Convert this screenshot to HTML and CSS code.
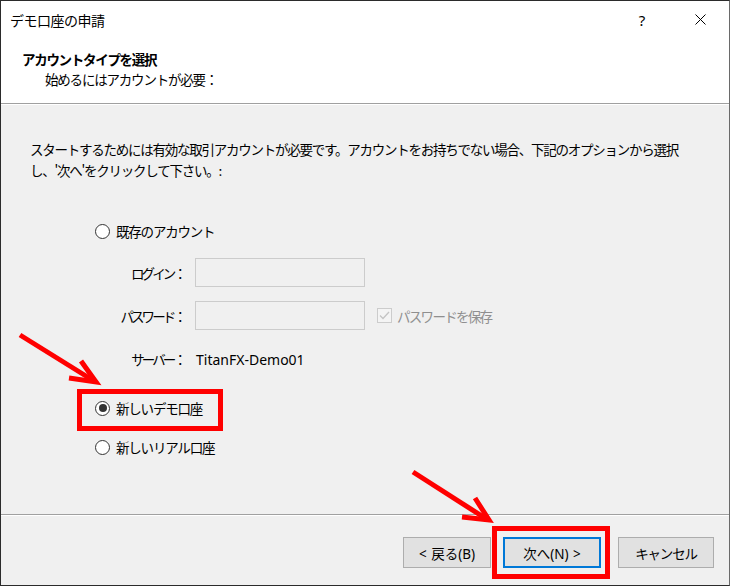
FILE: index.html
```html
<!DOCTYPE html>
<html lang="ja">
<head>
<meta charset="utf-8">
<title>デモ口座の申請</title>
<link rel="stylesheet" href="styles.css">
</head>
<body>
<div class="window">
  <div class="titlebar">
    <div class="title">デモ口座の申請</div>
    <div class="controls">
      <div class="ctl help">?</div>
      <div class="ctl close">
        <svg width="11" height="11" viewBox="0 0 11 11"><path d="M0.5 0.5 L10.5 10.5 M10.5 0.5 L0.5 10.5" stroke="#000" stroke-width="1" fill="none"/></svg>
      </div>
    </div>
  </div>
  <div class="header">
    <div class="h-title">アカウントタイプを選択</div>
    <div class="h-sub">始めるにはアカウントが必要：</div>
  </div>
  <div class="sep"></div>
  <div class="content">
    <p class="intro">スタートするためには有効な取引アカウントが必要です。アカウントをお持ちでない場合、下記のオプションから選択<br>し、'次へ'をクリックして下さい。:</p>
    <div class="options">
      <div class="radio-row">
        <span class="radio"></span><span class="jp">既存のアカウント</span>
      </div>
      <div class="form">
        <div class="label jp">ログイン：</div>
        <div class="input"></div>
        <div></div>
        <div class="label jp">パスワード：</div>
        <div class="input"></div>
        <div class="check-row">
          <span class="check">
            <svg width="13" height="13" viewBox="0 0 13 13"><path d="M2 6.5 L5 9.5 L11 3" stroke="#c4c4c4" stroke-width="1.3" fill="none"/></svg>
          </span>
          <span class="jp disabled">パスワードを保存</span>
        </div>
        <div class="label server jp">サーバー：</div>
        <div class="value server">TitanFX-Demo01</div>
        <div></div>
      </div>
      <div class="radio-row demo">
        <span class="radio checked"></span><span class="jp">新しいデモ口座</span>
      </div>
      <div class="radio-row real">
        <span class="radio"></span><span class="jp">新しいリアル口座</span>
      </div>
    </div>
  </div>
  <div class="sep"></div>
  <div class="footer">
    <button class="btn back">&lt; 戻る(B)</button>
    <button class="btn next">次へ(N) &gt;</button>
    <button class="btn cancel">キャンセル</button>
  </div>
  <svg class="annot" width="730" height="586" viewBox="0 0 730 586">
    <g stroke="#ff0000" stroke-width="5" fill="none" stroke-linecap="butt" stroke-linejoin="miter">
      <path d="M20 335 L94 381"/>
      <path d="M81 361 L96 382 L69 378"/>
      <rect x="79.5" y="391.5" width="141" height="37"/>
      <path d="M413 472 L488 520"/>
      <path d="M475 498 L489 520 L462 517"/>
      <rect x="494.5" y="528.5" width="113" height="48"/>
    </g>
  </svg>
</div>
</body>
</html>
```
FILE: styles.css
```css
html, body {
  margin: 0;
  padding: 0;
}
body {
  width: 730px;
  height: 586px;
  overflow: hidden;
  font-family: "Noto Sans", "Noto Sans CJK JP", sans-serif;
  color: #000;
  background: #fff;
}
.window {
  position: relative;
  box-sizing: border-box;
  width: 730px;
  height: 586px;
  border: 1px solid #2b2b2b;
  border-right-color: #6a6a6a;
  display: flex;
  flex-direction: column;
  background: #f0f0f0;
}
.titlebar {
  height: 37px;
  flex: none;
  display: flex;
  align-items: center;
  background: #fff;
  padding-left: 9px;
}
.title {
  flex: 1;
  font-size: 14px;
  letter-spacing: -0.5px;
  font-family: "Noto Sans CJK JP", sans-serif;
}
.controls {
  display: flex;
  gap: 12px;
  padding-right: 6px;
}
.ctl {
  width: 46px;
  height: 37px;
  display: flex;
  align-items: center;
  justify-content: center;
}
.help {
  font-family: "Noto Sans", sans-serif;
  font-size: 15px;
}
.header {
  height: 65px;
  flex: none;
  box-sizing: border-box;
  background: #fff;
  padding: 11px 0 0 21px;
  font-family: "Noto Sans CJK JP", sans-serif;
}
.h-title {
  font-size: 13.5px;
  font-weight: bold;
  letter-spacing: -1.3px;
  line-height: 20px;
}
.h-sub {
  font-size: 13.5px;
  letter-spacing: -1.2px;
  line-height: 20px;
  padding-left: 23px;
}
.sep {
  flex: none;
  height: 1px;
  background: #a0a0a0;
  border-bottom: 1px solid #fff;
}
.content {
  flex: 1;
  padding: 34px 0 0 29px;
}
.jp, .intro, .label {
  font-family: "Noto Sans CJK JP", sans-serif;
  font-size: 13.5px;
  letter-spacing: -1.2px;
}
.intro {
  margin: 0;
  line-height: 21px;
  letter-spacing: -1.25px;
  white-space: nowrap;
}
.options {
  margin: 39px 0 0 65px;
}
.radio-row {
  display: flex;
  align-items: center;
  gap: 6px;
  height: 22px;
}
.radio {
  box-sizing: border-box;
  width: 15px;
  height: 15px;
  border: 1px solid #333;
  border-radius: 50%;
  background: #fff;
  display: flex;
  align-items: center;
  justify-content: center;
}
.radio.checked::after {
  content: "";
  width: 8px;
  height: 8px;
  border-radius: 50%;
  background: #333;
}
.form {
  margin-top: 16px;
  display: grid;
  grid-template-columns: 90px 170px auto;
  grid-template-rows: 29px 29px 22px;
  column-gap: 10px;
  row-gap: 14px;
  align-items: center;
}
.label {
  text-align: right;
  letter-spacing: -2.9px;
  margin-right: 1px;
}
.input {
  box-sizing: border-box;
  height: 29px;
  border: 1px solid #cccccc;
  background: #f0f0f0;
}
.check-row {
  display: flex;
  align-items: center;
  gap: 5px;
  margin-left: 2px;
}
.check {
  box-sizing: border-box;
  width: 15px;
  height: 15px;
  border: 1px solid #cccccc;
  background: #f4f4f4;
  display: flex;
  align-items: center;
  justify-content: center;
}
.disabled {
  color: #8f8f8f;
  letter-spacing: -1.7px;
}
.server {
  margin-top: 8px;
}
.value {
  font-family: "Noto Sans", sans-serif;
  font-size: 14px;
  padding-left: 1px;
}
.radio-row.demo {
  margin-top: 31px;
}
.radio-row.real {
  margin-top: 17px;
}
.footer {
  height: 69px;
  flex: none;
  box-sizing: border-box;
  display: flex;
  justify-content: flex-end;
  align-items: flex-start;
  padding: 21px 15px 0 0;
}
.btn {
  box-sizing: border-box;
  height: 31px;
  margin: 0;
  padding: 0;
  border: 1px solid #adadad;
  background: #e1e1e1;
  font-family: "Noto Sans", "Noto Sans CJK JP", sans-serif;
  font-size: 13.5px;
  color: #000;
  letter-spacing: 0;
  word-spacing: 1px;
}
.back {
  width: 88px;
}
.next {
  width: 98px;
  margin-left: 12px;
  border: 2px solid #0078d7;
}
.cancel {
  width: 96px;
  margin-left: 17px;
  font-family: "Noto Sans CJK JP", sans-serif;
  letter-spacing: -1.2px;
}
.annot {
  position: absolute;
  left: -1px;
  top: -1px;
  pointer-events: none;
}
```
